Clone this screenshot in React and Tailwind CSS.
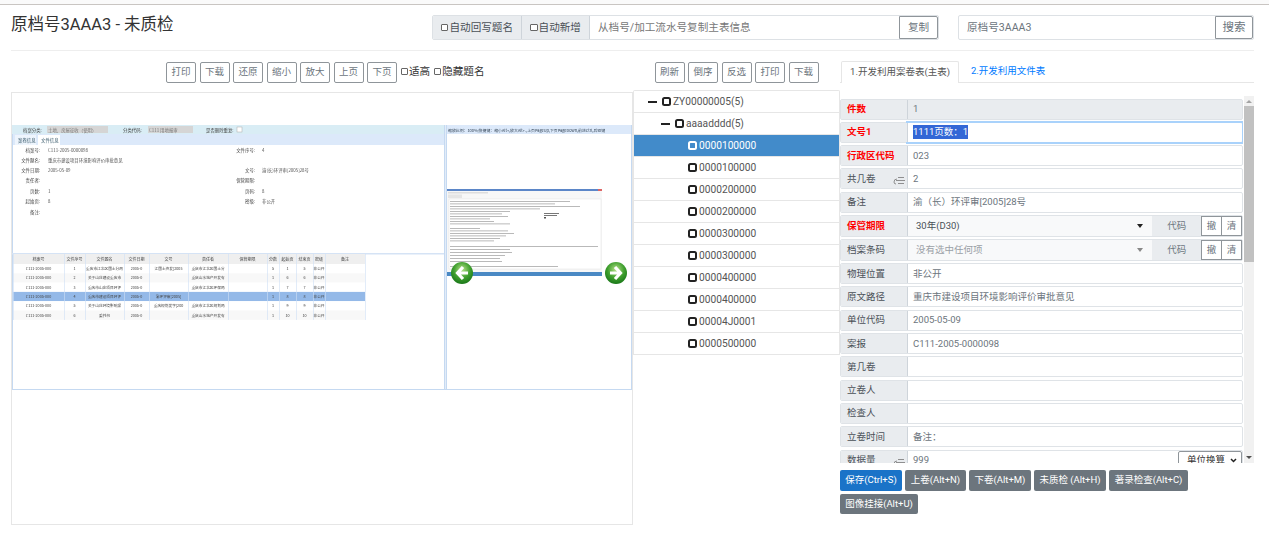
import React from "react";

const font = "font-['Roboto','Noto_Sans_CJK_SC',sans-serif]";

function ToolBtn({ children }) {
  return (
    <span className="flex h-[21px] w-[30px] items-center justify-center rounded-[2px] border border-[#8f959a] bg-white text-[9.5px] text-[#6c757d]">
      {children}
    </span>
  );
}

function Box({ white }) {
  return (
    <span className={`inline-block h-[9px] w-[9px] shrink-0 rounded-[2.5px] border-2 ${white ? "border-white" : "border-[#222]"}`} />
  );
}

function Check() {
  return <span className="mr-px inline-block h-[7.5px] w-[7.5px] shrink-0 rounded-[1px] border border-[#666] bg-white" />;
}

function TreeRow({ text, depth, minus, active }) {
  const pad = depth === 0 ? "pl-[14px]" : depth === 1 ? "pl-[27px]" : "pl-[54px]";
  return (
    <div className={`flex h-[22px] items-center text-[10.2px] ${pad} border-b border-[#e6e6e6] ${active ? "bg-[#428bca] text-white" : "bg-white text-[#555]"}`}>
      {minus && <span className="mr-[5px] h-[2px] w-[9px] bg-[#222]" />}
      <Box white={active} />
      <span className="ml-[2px]">{text}</span>
    </div>
  );
}

function Label({ children, red, icon }) {
  return (
    <div className={`relative flex w-[67px] shrink-0 items-center border-r border-[#ced4da] bg-[#e9ecef] pl-[6px] text-[9.5px] ${red ? "font-bold text-[#f00]" : "text-[#495057]"}`}>
      {children}
      {icon && (
        <svg className="absolute right-[1px] top-[7px]" width="13" height="9" viewBox="0 0 13 9" fill="none" stroke="#777" strokeWidth="0.8">
          <path d="M5 1.5h6M3 4.5h9M5 7.5h6" />
          <path d="M4 3 a3 3 0 0 0 -3 3 a2 2 0 0 0 2 2" />
        </svg>
      )}
    </div>
  );
}

function Row({ label, value, red, icon, readOnly }) {
  return (
    <div className={`mb-[2.33px] flex h-[21px] overflow-hidden rounded-[2px] border border-[#dfe3e7] ${readOnly ? "bg-[#e9ecef]" : "bg-white"}`}>
      <Label red={red} icon={icon}>{label}</Label>
      <div className="flex flex-1 items-center pl-[5px] text-[9.5px] text-[#6c757d]">{value}</div>
    </div>
  );
}

function SelectRow({ label, value, red, muted }) {
  return (
    <div className="mb-[2px] flex h-[22px] overflow-hidden rounded-[2px] border border-[#dfe3e7] bg-white">
      <Label red={red}>{label}</Label>
      <div className={`flex w-[245px] items-center justify-between bg-[#f8f9fa] pl-[8px] pr-[9px] text-[9.5px] ${muted ? "text-[#9aa0a6]" : "text-[#495057]"}`}>
        <span>{value}</span>
        <span className={`h-0 w-0 border-x-[3.5px] border-t-[4px] border-x-transparent ${muted ? "border-t-[#888]" : "border-t-[#222]"}`} />
      </div>
      <div className="flex w-[49px] items-center justify-center bg-[#e9ecef] text-[9.5px] text-[#6c757d]">代码</div>
      <span className="flex w-[21px] items-center justify-center border border-[#8f959a] text-[9.5px] text-[#6c757d]">撤</span>
      <span className="flex w-[20px] items-center justify-center border border-l-0 border-[#8f959a] text-[9.5px] text-[#6c757d]">清</span>
    </div>
  );
}

function ActionBtn({ children, primary, w }) {
  return (
    <span className={`flex h-[20.5px] items-center justify-center whitespace-nowrap rounded-[2px] text-[9.5px] text-white ${w} ${primary ? "bg-[#1a73c8]" : "bg-[#6c757d]"}`}>
      {children}
    </span>
  );
}

const colX = [13, 64, 85, 124, 149, 188, 228, 267, 279, 296, 313, 325, 365];
const heads = ["档案号", "文件序号", "文件题名", "文件日期", "文号", "责任者", "保管期限", "分数", "起始页", "结束页", "密级", "备注"];
const rowsData = [
  ["C111-2005-0000098", "1", "重庆市江北区国土分局", "2005-05-26", "江国土资发[2005]1", "重庆市江北区国土分", "", "5", "1", "5", "非公开", ""],
  ["C111-2005-0000098", "2", "关于山庄建设重庆市", "2005-05-24", "", "重庆山水地产开发有", "", "1", "6", "6", "非公开", ""],
  ["C111-2005-0000098", "3", "重庆市山庄项目环评", "2005-05-08", "", "重庆市江北区环保局", "", "1", "7", "7", "非公开", ""],
  ["C111-2005-0000098", "4", "重庆市建设项目环评", "2005-05-09", "渝环评审[2005]", "", "", "1", "8", "8", "非公开", ""],
  ["C111-2005-0000098", "5", "关于山庄环境影响报", "2005-05-25", "重庆规划发字[2005]", "重庆市江北区规划局", "", "1", "9", "9", "非公开", ""],
  ["C111-2005-0000098", "6", "委托书", "2005-05-20", "", "重庆山水地产开发有", "", "1", "10", "10", "非公开", ""],
];
const leftInfo = [
  [150, "档案号:", "C111-2005-0000098", "文件序号:", "4"],
  [160, "文件题名:", "重庆市建设项目环境影响评价审批意见", "", ""],
  [170, "文件日期:", "2005-05-09", "文号:", "渝(长)环评审[2005]28号"],
  [180, "责任者:", "", "保管期限:", ""],
  [191, "页数:", "1", "页码:", "8"],
  [201, "起始页:", "8", "密级:", "非公开"],
  [212, "备注:", "", "", ""],
];

const greek = [
  [449, 201, 120], [449, 203.5, 105], [449, 206, 130], [449, 208.5, 90], [449, 211, 60], [449, 213.5, 52], [449, 216, 58], [449, 218.5, 40], [449, 221, 44], [449, 223.5, 60],
  [449, 228, 30], [449, 230.5, 58], [449, 233, 64], [449, 235.5, 56], [449, 238, 50], [449, 240.5, 44], [449, 246, 148], [449, 249, 60], [449, 252, 62], [449, 255, 55], [449, 258, 50], [449, 261, 52], [449, 266, 108],
];

function Arrow({ cx, dir }) {
  const d = dir === "l" ? `M${cx + 6} ${273}h-9M${cx + 1} ${267}l-5.5 6 5.5 6` : `M${cx - 6} ${273}h9M${cx - 1} ${267}l5.5 6 -5.5 6`;
  return (
    <g>
      <circle cx={cx} cy="273" r="11" fill="url(#greenBall)" />
      <path d={d} fill="none" stroke="#fff" strokeWidth="3.2" />
    </g>
  );
}

function NestedShot() {
  const t = { fontFamily: "'Noto Sans CJK SC', sans-serif" };
  return (
    <svg className="block" width="620" height="266" viewBox="12 124 620 266" style={{ filter: "blur(0.35px)" }}>
      <defs>
        <radialGradient id="greenBall" cx="0.5" cy="0.35" r="0.75">
          <stop offset="0" stopColor="#b7e28a" />
          <stop offset="0.5" stopColor="#3f9f2e" />
          <stop offset="1" stopColor="#0d6a12" />
        </radialGradient>
      </defs>
      <rect x="12" y="124" width="620" height="266" fill="#fff" />
      <rect x="12" y="125" width="432" height="9" fill="#d9edf5" />
      <rect x="12" y="134" width="432" height="11" fill="#dce9fa" />
      <rect x="38" y="135" width="22" height="10" fill="#fff" />
      <rect x="15" y="135" width="21" height="10" fill="#eef5fd" />
      <rect x="47" y="126" width="61" height="7" fill="#d5d5d5" />
      <rect x="148" y="126" width="45" height="7" fill="#d5d5d5" />
      <rect x="237" y="127" width="5" height="5" fill="#fff" stroke="#aaa" strokeWidth="0.5" />
      <g style={t} fontSize="4.4" fill="#444">
        <text x="23" y="132">档案分类:</text>
        <text x="48" y="132" fill="#777">土地、房屋征收（使用）</text>
        <text x="123" y="132">分类代码:</text>
        <text x="149" y="132" fill="#777">C111 用地报审</text>
        <text x="206" y="132">是否删除重复:</text>
        <text x="18" y="142" fill="#356">案卷信息</text>
        <text x="41" y="142" fill="#356">文件信息</text>
        {leftInfo.map(([y, a, b, c, d]) => (
          <g key={y}>
            <text x="40" y={y + 1.5} textAnchor="end">{a}</text>
            <text x="48" y={y + 1.5} fill="#555">{b}</text>
            <text x="255" y={y + 1.5} textAnchor="end">{c}</text>
            <text x="262" y={y + 1.5} fill="#555">{d}</text>
          </g>
        ))}
      </g>
      <rect x="12" y="134" width="1" height="256" fill="#c5d9f1" />
      <rect x="12" y="253" width="432" height="1.5" fill="#d5e3f5" />
      <rect x="444" y="125" width="1.5" height="265" fill="#c5d9f1" />
      <rect x="446" y="125" width="1" height="265" fill="#c5d9f1" />
      <rect x="631" y="125" width="1" height="265" fill="#c5d9f1" />
      <rect x="12" y="389" width="620" height="1" fill="#c5d9f1" />

      <rect x="13" y="254" width="352" height="10" fill="#efefef" />
      {rowsData.map((r, i) => (
        <rect key={i} x="13" y={264 + i * 9.3} width="352" height="9.3" fill={i === 3 ? "#94b9e8" : i % 2 ? "#f8f8f8" : "#fff"} />
      ))}
      {colX.map((x) => (
        <rect key={x} x={x} y="254" width="0.6" height="66" fill="#cfe0f5" />
      ))}
      <g style={t} fontSize="4" textAnchor="middle" fill="#444">
        {heads.map((h, i) => (
          <text key={h + i} x={(colX[i] + colX[i + 1]) / 2} y="261">{h}</text>
        ))}
      </g>
      {rowsData.map((r, i) => (
        <g key={i} style={t} fontSize="3.7" fill="#444">
          {r.map((c, j) => {
            const w = colX[j + 1] - colX[j];
            const text = c.length * 3.7 > w ? c.slice(0, Math.floor(w / 3.7)) : c;
            return (
              <text key={j} x={(colX[j] + colX[j + 1]) / 2} y={270 + i * 9.3} textAnchor="middle">{text}</text>
            );
          })}
        </g>
      ))}

      <rect x="447" y="125" width="184" height="9" fill="#dce9fa" />
      <text x="448" y="131.5" style={t} fontSize="3.9" fill="#345">缩放比例：100%;快捷键：缩小Alt+,放大Alt+.,上页PageUp,下页PageDown,前进Ctrl,后退键</text>

      <rect x="447" y="189" width="155" height="87" fill="#f7f7f7" />
      <rect x="447" y="189" width="155" height="2" fill="#5b86c8" />
      <rect x="598" y="189" width="4" height="2" fill="#d66" />
      <rect x="448" y="192" width="40" height="1.5" fill="#ddd" />
      <rect x="448" y="194.5" width="14" height="3.5" fill="#e5e5e5" />
      <rect x="449" y="199" width="152" height="70" fill="#fff" stroke="#ddd" strokeWidth="0.4" />
      {greek.map(([x, y, w]) => (
        <rect key={y} x={x + 1} y={y} width={w} height="0.8" fill="#a8a8a8" />
      ))}
      <rect x="544" y="213" width="15" height="0.8" fill="#555" />
      <rect x="544" y="215" width="13" height="0.8" fill="#555" />
      <rect x="544" y="217" width="2" height="1.5" fill="#555" />
      <rect x="447" y="272" width="155" height="4" fill="#4a89c4" />
      <Arrow cx={462} dir="l" />
      <Arrow cx={616} dir="r" />
    </svg>
  );
}

export default function App() {
  const tree = ["0000100000", "0000100000", "0000200000", "0000200000", "0000300000", "0000300000", "0000400000", "0000400000", "00004J0001", "0000500000"];
  return (
    <div className={`h-[550px] w-full overflow-hidden bg-white ${font}`}>
      <div className="h-[5px] border-b border-[#c9c5c2] bg-[#fafafa]" />

      <div className="ml-[11px] mr-[15px] flex h-[46px] items-start border-b border-[#eee] pt-[10px]">
        <div className="-mt-px w-[421px] text-[16.5px] leading-[22px] text-[#333]">原档号3AAA3 - 未质检</div>
        <div className="flex h-[25px] w-[507px] overflow-hidden rounded-[2px] border border-[#dde1e5] text-[10.6px] text-[#6c757d]">
          <span className="flex w-[89px] items-center justify-center border-r border-[#ced4da] bg-[#e9ecef] text-[#495057]"><Check />自动回写题名</span>
          <span className="flex w-[68px] items-center justify-center border-r border-[#ced4da] bg-[#e9ecef] text-[#495057]"><Check />自动新增</span>
          <span className="flex flex-1 items-center pl-[8px] text-[#777]">从档号/加工流水号复制主表信息</span>
          <span className="flex w-[39px] items-center justify-center rounded-r-[2px] border border-[#8f959a]">复制</span>
        </div>
        <div className="ml-[19px] flex h-[25px] w-[296px] overflow-hidden rounded-[2px] border border-[#dde1e5] text-[10.6px] text-[#6c757d]">
          <span className="flex flex-1 items-center pl-[8px]">原档号3AAA3</span>
          <span className="flex w-[38px] items-center justify-center rounded-r-[2px] border border-[#8f959a] text-[11.5px]">搜索</span>
        </div>
      </div>

      <div className="ml-[11px] flex">
        <div className="w-[622px] shrink-0">
          <div className="flex h-[41px] items-start gap-[3.5px] pl-[155px] pt-[11px]">
            {["打印", "下载", "还原", "缩小", "放大", "上页", "下页"].map((b) => (
              <ToolBtn key={b}>{b}</ToolBtn>
            ))}
            <span className="flex h-[19px] items-center text-[10.6px] text-[#333]"><Check />适高</span>
            <span className="flex h-[19px] items-center text-[10.6px] text-[#333]"><Check />隐藏题名</span>
          </div>
          <div className="h-[433px] border border-[#e6e6e6] pt-[31px]">
            <NestedShot />
          </div>
        </div>

        <div className="w-[207px] shrink-0">
          <div className="flex h-[39px] items-start justify-center gap-[3.5px] pt-[11px]">
            {["刷新", "倒序", "反选", "打印", "下载"].map((b) => (
              <ToolBtn key={b}>{b}</ToolBtn>
            ))}
          </div>
          <div className="overflow-hidden rounded-t-[2px] border-x border-t border-[#e6e6e6]">
            <TreeRow text="ZY00000005(5)" depth={0} minus />
            <TreeRow text="aaaadddd(5)" depth={1} minus />
            {tree.map((t, i) => (
              <TreeRow key={i} text={t} depth={2} active={i === 0} />
            ))}
          </div>
        </div>

        <div className="w-[414px] shrink-0">
          <div className="mt-[10px] flex h-[22px] items-end border-b border-[#e6e6e6] pl-px text-[9.5px]">
            <span className="flex h-[22px] w-[118px] translate-y-px items-center justify-center rounded-t-[2px] border border-b-0 border-[#e6e6e6] bg-white text-[#555]">1.开发利用案卷表(主表)</span>
            <span className="flex h-[21px] items-center pl-[12px] text-[#007bff]">2.开发利用文件表</span>
          </div>
          <div className="mt-[13px] flex h-[367px]">
            <div className="w-[403px] shrink-0 overflow-hidden pt-[2.5px]">
              <Row label="件数" red value="1" readOnly />
              <div className="mb-[2.33px] flex h-[21px] rounded-[2px] border border-[#dfe3e7] bg-white">
                <Label red>文号1</Label>
                <div className="flex flex-1 items-center pl-[5px] text-[9.5px] outline-2 outline-[#a9d2fb]">
                  <span className="bg-[#3367d6] text-white">1111页数：1</span>
                </div>
              </div>
              <Row label="行政区代码" red value="023" />
              <Row label="共几卷" icon value="2" />
              <Row label="备注" value="渝（长）环评审[2005]28号" />
              <SelectRow label="保管期限" red value="30年(D30)" />
              <SelectRow label="档案条码" muted value="没有选中任何项" />
              <Row label="物理位置" value="非公开" />
              <Row label="原文路径" value="重庆市建设项目环境影响评价审批意见" />
              <Row label="单位代码" value="2005-05-09" />
              <Row label="案报" value="C111-2005-0000098" />
              <Row label="第几卷" value="" />
              <Row label="立卷人" value="" />
              <Row label="检查人" value="" />
              <Row label="立卷时间" value="备注：" />
              <div className="flex h-[21px] overflow-hidden rounded-[2px] border border-[#dfe3e7] bg-white">
                <Label icon>数据量</Label>
                <div className="flex flex-1 items-center pl-[5px] text-[9.5px] text-[#6c757d]">999</div>
                <span className="flex w-[64px] items-center justify-between rounded-[2px] border border-[#8f959a] pl-[8px] pr-[4px] text-[9.5px] text-[#333]">
                  单位换算
                  <svg width="7" height="5" viewBox="0 0 7 5" fill="none" stroke="#222" strokeWidth="1.5"><path d="M1 1l2.5 2.5L6 1" /></svg>
                </span>
              </div>
            </div>
            <div className="ml-px flex w-[10px] flex-col items-center bg-[#f1f1f1]">
              <span className="mt-[4px] h-0 w-0 border-x-[3px] border-b-[3px] border-x-transparent border-b-[#a3a3a3]" />
              <span className="mt-[3px] h-[156px] w-full bg-[#c1c1c1]" />
              <span className="mb-[4px] mt-auto h-0 w-0 border-x-[3px] border-t-[3px] border-x-transparent border-t-[#505050]" />
            </div>
          </div>
          <div className="mt-[7px] flex w-[360px] flex-wrap gap-[3px]">
            <ActionBtn primary w="w-[62px]">保存(Ctrl+S)</ActionBtn>
            <ActionBtn w="w-[61px]">上卷(Alt+N)</ActionBtn>
            <ActionBtn w="w-[62px]">下卷(Alt+M)</ActionBtn>
            <ActionBtn w="w-[72px]">未质检 (Alt+H)</ActionBtn>
            <ActionBtn w="w-[79px]">著录检查(Alt+C)</ActionBtn>
            <ActionBtn w="w-[78px]">图像挂接(Alt+U)</ActionBtn>
          </div>
        </div>
      </div>
    </div>
  );
}
